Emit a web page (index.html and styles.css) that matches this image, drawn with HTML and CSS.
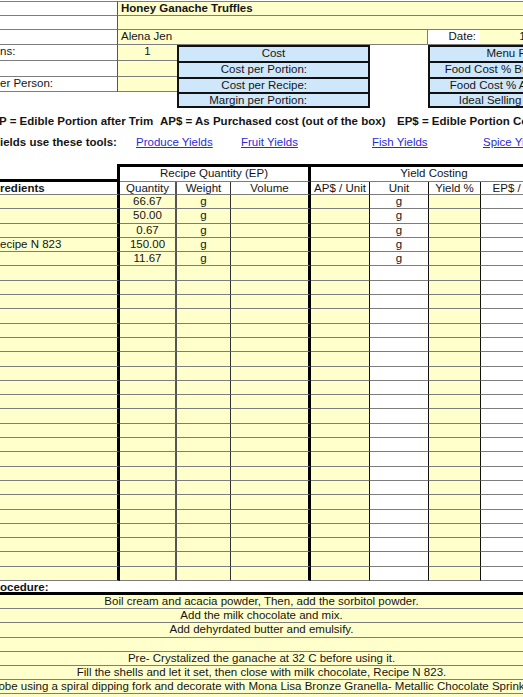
FILE: index.html
```html
<!DOCTYPE html>
<html>
<head>
<meta charset="utf-8">
<link rel="stylesheet" href="styles.css">
</head>
<body>
<div class="sheet">
  <div class="top">
    <div class="a r1"></div>
    <div class="y r1 span5 bold">Honey Ganache Truffles</div>
    <div class="a"></div>
    <div class="y span5"></div>
    <div class="a"></div>
    <div class="y span3 yr">Alena Jen</div>
    <div class="date-label">Date:</div>
    <div class="y center date">11/15/2012</div>
    <div class="a">ns:</div>
    <div class="y center">1</div>
    <div class="blue center">Cost</div>
    <div class="gap"></div>
    <div class="blue span2 center menu">Menu Pricing</div>
    <div class="a"></div>
    <div class="y"></div>
    <div class="blue label">Cost per Portion:</div>
    <div class="blue span2 label wide">Food Cost % Budget:</div>
    <div class="a">er Person:</div>
    <div class="y"></div>
    <div class="blue label">Cost per Recipe:</div>
    <div class="blue span2 label wide">Food Cost % Actual:</div>
    <div class="blank span2"></div>
    <div class="blue label last">Margin per Portion:</div>
    <div class="blue span2 label wide last">Ideal Selling Price:</div>
  </div>

  <div class="legend">
    <span class="l1">P = Edible Portion after Trim</span>
    <span class="l2">AP$ = As Purchased cost (out of the box)</span>
    <span class="l3">EP$ = Edible Portion Cost (after trim)</span>
  </div>

  <div class="tools">
    <span class="t1">ields use these tools:</span>
    <a class="t2" href="#">Produce Yields</a>
    <a class="t3" href="#">Fruit Yields</a>
    <a class="t4" href="#">Fish Yields</a>
    <a class="t5" href="#">Spice Yields</a>
  </div>

  <div class="table">
    <div class="tr h1">
      <div class="c1"></div>
      <div class="grp grp1">Recipe Quantity (EP)</div>
      <div class="grp grp2">Yield Costing</div>
    </div>
    <div class="tr h2">
      <div class="c1 bold left">redients</div>
      <div class="c2">Quantity</div>
      <div class="c3">Weight</div>
      <div class="c4">Volume</div>
      <div class="c5">AP$ / Unit</div>
      <div class="c6">Unit</div>
      <div class="c7">Yield %</div>
      <div class="c8">EP$ / Unit</div>
    </div>
    <div id="rows"></div>
    <div class="proc-head bold">ocedure:</div>
    <div class="proc"><span>Boil cream and acacia powder, Then, add the sorbitol powder.</span></div>
    <div class="proc"><span>Add the milk chocolate and mix.</span></div>
    <div class="proc"><span>Add dehyrdated butter and emulsify.</span></div>
    <div class="proc"><span></span></div>
    <div class="proc"><span>Pre- Crystalized the ganache at 32 C before using it.</span></div>
    <div class="proc"><span>Fill the shells and let it set, then close with milk chocolate, Recipe N 823.</span></div>
    <div class="proc"><span>Enrobe using a spiral dipping fork and decorate with Mona Lisa Bronze Granella- Metallic Chocolate Sprinkles.</span></div>
    <div class="proc"><span></span></div>
  </div>
</div>
<script src="app.js"></script>
</body>
</html>
```

FILE: app.js
```js
const data = [
  ["", "66.67", "g", "g"],
  ["", "50.00", "g", "g"],
  ["", "0.67", "g", "g"],
  ["ecipe N 823", "150.00", "g", "g"],
  ["", "11.67", "g", "g"]
];
const rows = document.getElementById("rows");
for (let i = 0; i < 27; i++) {
  const d = data[i] || ["", "", "", ""];
  const tr = document.createElement("div");
  tr.className = "tr data";
  tr.innerHTML =
    '<div class="c1 left">' + d[0] + '</div>' +
    '<div class="c2">' + d[1] + '</div>' +
    '<div class="c3">' + d[2] + '</div>' +
    '<div class="c4"></div>' +
    '<div class="c5"></div>' +
    '<div class="c6 white">' + d[3] + '</div>' +
    '<div class="c7"></div>' +
    '<div class="c8 white"></div>';
  rows.appendChild(tr);
}
```

FILE: styles.css
```css
html, body {
  margin: 0;
  padding: 0;
  overflow: hidden;
  background: #fff;
}
body {
  width: 523px;
  height: 697px;
  font-family: "Liberation Sans", Arial, sans-serif;
  font-size: 11.5px;
  color: #151515;
}
.sheet {
  width: 620px;
}
.bold { font-weight: bold; }
.center { text-align: center; }

/* top info block */
.top {
  display: grid;
  grid-template-columns: 118px 59px 193px 58px 52px 140px;
  grid-template-rows: 15px 14px 15px 16px 16px 15px 16px;
  margin-top: 1px;
  line-height: 13px;
}
.top > div {
  box-sizing: border-box;
  white-space: nowrap;
  overflow: hidden;
}
.top .a {
  border-bottom: 1px solid #7d7d7d;
  border-right: 1px solid #555;
}
.top .r1 { border-top: 1px solid #7d7d7d; }
.top .y {
  background: #ffffcc;
  border-bottom: 1px solid #7d7d7d;
  padding-left: 3px;
}
.top .y.center { padding-left: 0; }
.top .y.date { padding-right: 5px; }
.top .yr { border-right: 1px solid #7d7d7d; }
.span5 { grid-column: span 5; }
.span3 { grid-column: span 3; }
.span2 { grid-column: span 2; }
.date-label {
  text-align: right;
  padding-right: 4px;
  border-bottom: 1px solid #7d7d7d;
}
.gap { grid-row: span 4; }
.blue {
  background: #cfe7fa;
  border: 2px solid #111;
  border-bottom: none;
  line-height: 12px;
}
.blue.last { border-bottom: 2px solid #111; }
.blue.label {
  text-align: right;
  padding-right: 61px;
}
.blue.label.wide { padding-right: 64px; }
.blue.menu { padding-right: 8px; }

/* legend lines */
.legend, .tools {
  display: flex;
  white-space: nowrap;
  line-height: 14px;
}
.legend {
  font-weight: bold;
  margin-top: 6px;
}
.legend .l1 { width: 161px; flex: none; margin-left: -1px; }
.legend .l2 { width: 237px; flex: none; }
.tools { margin-top: 7px; }
.tools .t1 { width: 136px; flex: none; font-weight: bold; }
.tools .t2 { width: 105px; flex: none; }
.tools .t3 { width: 131px; flex: none; }
.tools .t4 { width: 111px; flex: none; }
.tools a {
  color: #2b2bd6;
  text-decoration: underline;
}

/* main table */
.table { margin-top: 15px; }
.tr {
  display: grid;
  grid-template-columns: 120px 57px 54px 80px 59px 59px 52px 76px;
}
.tr > div {
  box-sizing: border-box;
  text-align: center;
  white-space: nowrap;
  overflow: hidden;
}
.tr .left { text-align: left; }
.h1 { height: 18px; }
.h1 .c1 { border-bottom: 3px solid #000; }
.h1 .grp {
  border-top: 3px solid #000;
  border-bottom: 1px solid #7d7d7d;
  line-height: 12px;
}
.h1 .grp1 {
  grid-column: span 3;
  border-right: 3px solid #000;
}
.h1 .grp2 { grid-column: span 4; }
.h2 { height: 13px; line-height: 12px; }
.h2 > div { border-bottom: 1px solid #7d7d7d; }
.tr .c1 { border-right: 3px solid #000; }
.tr .c2 { border-right: 2px solid #555; }
.tr .c3 { border-right: 1px solid #333; }
.tr .c4 { border-right: 3px solid #000; }
.tr .c5, .tr .c6, .tr .c7, .tr .c8 { border-right: 1px solid #111; }
.data { height: 14.3px; line-height: 13px; }
.data > div {
  background: #ffffcc;
  border-bottom: 1px solid #7d7d7d;
}
.data > div.white { background: #fff; }

.proc-head {
  height: 14px;
  box-sizing: border-box;
  border-bottom: 3px solid #000;
  line-height: 12px;
  width: 620px;
}
.proc {
  width: 523px;
  height: 14.2px;
  box-sizing: border-box;
  background: #ffffcc;
  border-bottom: 1px solid #7d7d7d;
  display: flex;
  justify-content: center;
  line-height: 13px;
  white-space: nowrap;
}
.proc span { flex: none; }
```
